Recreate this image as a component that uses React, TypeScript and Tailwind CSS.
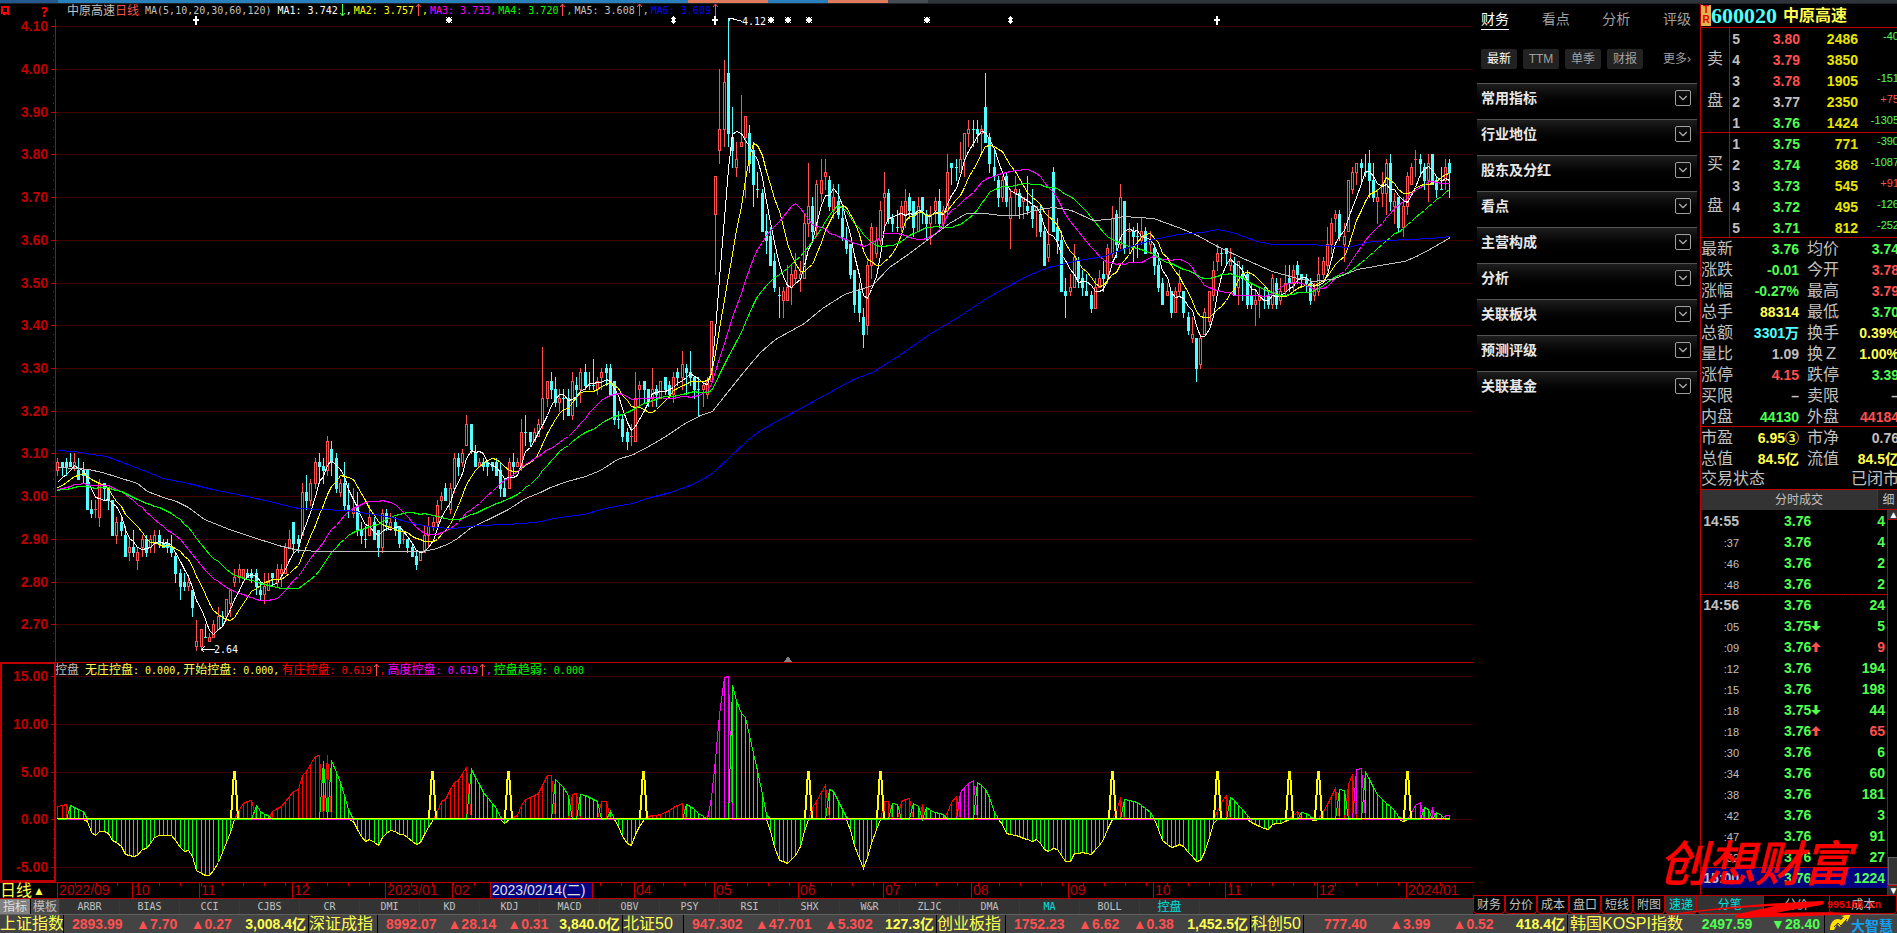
import clsx from "clsx";
import { ChevronDown } from "lucide-react";

const CJK = "font-['Liberation_Sans','Noto_Sans_CJK_SC',sans-serif]";
const MONO = "font-['DejaVu_Sans_Mono','Noto_Sans_CJK_SC',monospace] text-[10px]";

// open close high low, in cents, one candle per trading day
const CANDLES = `
306 308 309 305,308 307 308 305,308 307 309 305,308 307 310 307,307 308 310 306,306 304 309 304,306 305 308 303,306 297 306 297,297 296 299 295,297 297 299 295,
295 303 304 293,303 302 303 299,302 299 302 297,299 291 299 291,291 294 295 289,294 292 295 291,291 286 293 286,287 288 290 285,288 287 292 286,285 287 288 283,
288 290 291 286,290 287 291 286,288 290 291 287,289 291 292 287,291 289 292 288,289 288 290 288,289 288 290 287,288 287 291 286,286 282 287 280,282 279 283 276,
280 279 282 278,279 280 281 278,278 274 278 272,265 266 271 264,265 269 269 264,267 267 270 267,266 267 268 266,267 270 271 267,269 272 274 269,272 272 273 270,
272 276 276 271,275 278 278 272,280 281 283 279,281 283 284 280,281 283 283 281,282 281 283 281,282 281 283 280,282 279 283 277,278 277 280 276,277 279 282 275,
278 280 282 278,282 281 282 279,280 283 284 279,282 283 284 279,282 288 289 282,288 290 292 288,294 289 294 287,290 289 291 287,291 301 303 291,301 299 305 297,
299 303 304 298,303 308 309 302,308 307 310 303,307 306 309 303,306 313 314 305,311 308 313 305,309 302 310 301,301 303 304 300,303 298 308 297,298 297 303 295,
296 297 302 295,298 292 301 291,292 291 294 289,290 290 293 288,291 295 298 291,294 290 295 290,292 288 292 286,288 296 297 287,296 294 297 292,293 294 296 292,
294 292 295 291,293 289 293 288,290 290 292 289,290 288 290 287,288 286 289 286,286 284 287 283,285 287 287 285,287 291 293 287,291 293 295 288,293 294 295 292,
294 298 299 293,299 300 301 297,302 299 303 299,297 302 303 296,302 309 310 301,309 307 310 305,308 310 311 307,312 317 319 312,317 311 317 310,310 307 312 307,
307 308 309 307,308 307 309 306,308 307 308 305,308 307 308 306,308 305 309 305,306 302 308 300,302 300 304 300,302 308 309 302,308 307 310 305,307 308 309 307,
307 315 318 306,315 315 319 312,315 313 315 312,313 315 316 313,314 317 318 314,317 323 335 316,323 327 327 321,327 325 329 323,325 322 328 321,322 323 325 320,
323 323 325 318,323 319 325 319,319 327 329 318,326 325 328 321,325 329 330 322,329 326 331 325,326 326 329 325,326 326 332 325,325 327 328 324,328 329 330 325,
330 329 331 326,330 324 331 324,327 318 327 317,318 318 320 316,318 314 319 313,315 313 316 311,314 314 317 312,313 323 329 313,325 326 327 321,327 325 327 322,
325 322 325 321,323 325 330 321,325 324 326 321,323 327 327 323,328 325 328 324,326 324 327 323,324 328 329 322,329 328 330 326,328 331 334 325,330 329 331 324,
329 328 334 326,328 325 328 323,325 325 328 319,325 326 327 321,324 327 328 323,327 341 341 327,366 375 375 352,381 386 400 378,386 397 402 382,399 385 412 382,
384 381 391 377,377 379 383 375,382 383 394 382,384 389 389 370,385 378 387 376,381 373 383 368,372 372 376 370,371 362 372 362,362 360 366 357,361 354 363 354,
355 349 357 348,347 347 349 342,346 348 349 342,346 349 354 346,349 352 354 345,351 353 357 350,351 352 355 348,351 364 366 351,364 368 378 361,368 362 370 360,
363 373 374 361,371 374 379 369,375 376 379 372,374 368 375 367,367 370 373 365,369 366 373 365,365 361 368 360,360 358 363 357,359 352 359 351,353 345 353 343,
348 343 350 341,342 338 344 335,340 354 355 338,354 363 364 351,357 360 363 356,360 367 369 359,370 371 376 362,371 365 372 364,365 364 366 362,363 363 367 362,
363 368 369 362,366 369 372 363,370 367 371 365,369 363 369 361,362 368 370 362,370 367 370 364,366 364 367 360,364 366 368 359,367 369 370 364,369 364 372 363,
364 367 368 363,367 376 380 366,378 377 378 373,377 377 379 374,376 379 383 376,379 385 385 375,385 386 388 382,386 386 388 382,386 385 388 383,385 386 387 380,
391 383 399 383,384 378 385 376,377 375 381 374,374 370 375 368,370 374 375 369,375 369 376 368,365 370 372 358,371 372 375 366,371 368 372 365,369 370 370 365,
368 367 375 366,368 365 372 363,367 368 368 361,366 362 368 361,362 354 363 354,356 359 367 355,376 362 377 362,363 360 365 357,360 348 362 348,348 347 351 342,
348 349 352 347,349 356 359 349,355 351 356 349,351 349 353 347,348 347 352 347,347 344 348 343,344 349 351 344,349 351 353 349,352 351 355 348,352 358 359 350,
357 365 368 356,366 359 367 356,359 370 373 358,369 358 369 357,362 362 364 357,362 361 363 355,361 361 364 356,360 362 365 359,362 357 363 357,359 360 362 357,
358 354 359 352,354 349 357 348,350 345 351 345,347 348 350 347,348 343 348 342,343 348 349 343,348 350 353 347,348 343 348 342,342 339 343 338,337 338 342 336,
337 330 337 327,331 337 338 330,338 343 344 338,341 348 348 340,347 353 355 346,355 357 359 353,357 357 358 354,358 357 358 354,354 355 358 353,354 347 356 347,
349 355 355 345,352 351 354 346,352 345 353 344,347 345 350 344,345 346 348 340,346 347 349 342,346 346 349 344,347 345 348 344,345 351 352 344,350 345 351 344,
346 348 351 345,348 350 354 347,351 350 354 348,350 353 354 348,354 352 355 350,352 351 352 349,351 350 352 348,350 346 351 345,347 348 350 346,348 352 356 347,
352 355 356 351,354 359 363 353,359 364 365 357,365 366 367 362,366 361 367 360,359 361 364 355,362 374 374 362,372 376 377 371,376 378 378 373,378 377 379 373,
376 376 380 375,378 374 381 370,374 370 378 369,369 370 372 364,371 373 376 368,371 378 379 366,378 369 380 367,368 369 371 364,370 363 370 362,363 368 370 361,
368 375 376 366,373 377 378 373,379 379 381 375,379 378 380 375,377 374 378 372,374 378 380 369,380 373 380 373,374 372 375 370,372 372 377 372,374 377 379 372,
378 376 379 370`
  .split(",")
  .map((c) => c.trim().split(" ").map(Number));

const MA60 =
  "58,467 76,468 88,469 102,472 118,477 137,483 147,491 163,497 176,501 188,507 204,519 229,529 253,537 278,545 298,550 322,551 355,551 420,551 433,549 447,544 457,538 471,527 486,520 508,509 525,498 540,492 550,487 567,481 585,476 600,470 617,459 633,454 650,445 667,435 683,424 700,415 712,411 727,392 743,372 760,352 775,339 804,323 822,308 844,294 872,285 889,267 909,253 929,238 949,223 966,213 984,213 1001,215 1018,215 1038,209 1053,207 1071,210 1093,220 1108,219 1123,216 1153,218 1178,227 1197,235 1217,246 1232,253 1247,260 1272,271 1297,278 1312,281 1332,279 1357,269 1374,266 1404,261 1416,256 1431,248 1450,237";
const MA120 =
  "58,450 73,451 92,454 106,456 122,462 143,470 163,478 188,483 212,489 237,494 265,500 298,508 318,509 347,510 367,513 392,517 408,522 433,527 453,528 478,525 506,524 535,522 559,517 584,514 600,509 615,506 632,503 650,497 670,492 687,486 700,480 712,473 730,456 747,440 760,430 853,379 872,372 899,355 929,334 959,316 986,298 1013,283 1028,275 1048,267 1073,261 1103,256 1128,247 1153,239 1178,234 1202,232 1217,229 1232,232 1257,241 1272,244 1312,244 1347,247 1372,241 1406,239 1431,238 1450,236";

// x and height of the control indicator, in px above the zero line
const CONTROL =
  `58,13 65,15 73,13 78,10 83,8 87,-2 91,-13 96,-17 99,-12 107,-12 111,-21 120,-25 124,-35 133,-37 138,-36 142,-30 146,-29 155,-17 158,-16 171,-16 176,-22 180,-28 184,-32 188,-31 192,-37 196,-51 200,-54 204,-56 209,-56 213,-51 218,-43 225,-25 230,-13 234,0 239,10 242,16 251,19 256,14 260,8 267,3 272,8 280,12 285,18 293,28 297,25 301,43 306,48 315,63 319,64 322,57 327,64 331,59 340,37 348,10 352,0 356,-8 360,-16 365,-22 369,-20 373,-22 378,-26 382,-18 390,-11 394,-11 399,-15 403,-15 416,-25 420,-23 424,-15 433,0 437,8 441,18 445,20 449,27 453,37 458,39 467,54 471,50 483,27 496,11 501,0 505,-5 509,0 513,2 518,5 522,17 526,21 533,23 538,26 547,44 551,44 556,39 563,32 567,24 576,26 584,24 596,18 606,18 612,3 615,0 624,-22 631,-26 635,-15 643,0 649,3 660,5 669,9 680,16 688,15 699,5 706,1 710,12 715,60 719,105 722,139 725,143 728,143 733,132 737,115 741,106 745,102 751,75 759,40 765,10 767,0 774,-27 779,-41 787,-44 792,-39 799,-31 804,-12 808,0 812,12 817,20 825,34 830,29 834,27 841,12 847,0 855,-30 863,-49 868,-35 872,-20 880,0 884,18 889,18 896,14 903,19 910,21 915,12 924,14 929,9 935,7 940,6 946,4 951,17 959,26 968,36 973,39 978,37 987,28 992,12 996,2 1000,0 1006,-14 1016,-16 1022,-19 1032,-22 1037,-20 1046,-33 1056,-28 1066,-44 1071,-42 1074,-34 1083,-33 1091,-35 1102,-22 1107,-10 1112,0 1118,14 1121,24 1124,20 1135,18 1143,13 1150,7 1154,0 1162,-21 1172,-29 1180,-24 1190,-35 1198,-44 1203,-36 1210,-15 1214,0 1220,15 1226,24 1231,22 1239,13 1247,4 1251,-3 1258,-7 1268,-10 1272,-5 1283,-3 1288,0 1297,8 1302,7 1308,5 1313,-1 1319,1 1327,15 1335,31 1341,30 1345,28 1352,45 1357,51 1362,51 1368,42 1376,26 1384,18 1393,10 1401,-1 1404,-3 1407,0 1415,14 1420,17 1426,10 1432,11 1439,4 1450,4`
    .split(" ")
    .map((p) => p.split(",").map(Number));

const SPIKES = [234, 432, 508, 643, 808, 880, 1112, 1217, 1289, 1318, 1407];
const STRONG = [
  [708, 732],
  [960, 979],
  [1353, 1364],
  [1407, 1450],
];

const MONTHS: [number, string][] = [
  [58, "2022/09"],
  [133, "10"],
  [200, "11"],
  [293, "12"],
  [386, "2023/01"],
  [453, "02"],
  [635, "04"],
  [715, "05"],
  [799, "06"],
  [884, "07"],
  [972, "08"],
  [1069, "09"],
  [1154, "10"],
  [1226, "11"],
  [1318, "12"],
  [1407, "2024/01"],
];

const TABS = ["ARBR", "BIAS", "CCI", "CJBS", "CR", "DMI", "KD", "KDJ", "MACD", "OBV", "PSY", "RSI", "SHX", "W&R", "ZLJC", "DMA", "MA", "BOLL", "控盘"];

const SELL = [
  ["5", "3.80", "2486", "-40"],
  ["4", "3.79", "3850", ""],
  ["3", "3.78", "1905", "-151"],
  ["2", "3.77", "2350", "+75"],
  ["1", "3.76", "1424", "-1305"],
];
const BUY = [
  ["1", "3.75", "771", "-390"],
  ["2", "3.74", "368", "-1087"],
  ["3", "3.73", "545", "+91"],
  ["4", "3.72", "495", "-126"],
  ["5", "3.71", "812", "-252"],
];

const RED = "text-[#ff5050]";
const GREEN = "text-[#50ff50]";
const YELLOW = "text-[#ffff50]";
const CYAN = "text-[#50ffff]";
const GRAY = "text-[#c0c0c0]";

const QUOTES = [
  ["最新", "3.76", GREEN, "均价", "3.74", GREEN],
  ["涨跌", "-0.01", GREEN, "今开", "3.78", RED],
  ["涨幅", "-0.27%", GREEN, "最高", "3.79", RED],
  ["总手", "88314", YELLOW, "最低", "3.70", GREEN],
  ["总额", "3301万", CYAN, "换手", "0.39%", YELLOW],
  ["量比", "1.09", GRAY, "换Ｚ", "1.00%", YELLOW],
  ["涨停", "4.15", RED, "跌停", "3.39", GREEN],
  ["买限", "–", GRAY, "卖限", "–", GRAY],
  ["内盘", "44130", GREEN, "外盘", "44184", RED],
];
const VALUES = [
  ["市盈", "6.95③", YELLOW, "市净", "0.76", GRAY],
  ["总值", "84.5亿", YELLOW, "流值", "84.5亿", YELLOW],
];

const TICKS = [
  ["14:55", "3.76", "4"],
  [":37", "3.76", "4"],
  [":46", "3.76", "2"],
  [":48", "3.76", "2"],
  ["14:56", "3.76", "24"],
  [":05", "3.75", "5", "down"],
  [":09", "3.76", "9", "up"],
  [":12", "3.76", "194"],
  [":15", "3.76", "198"],
  [":18", "3.75", "44", "down"],
  [":18", "3.76", "65", "up"],
  [":30", "3.76", "6"],
  [":34", "3.76", "60"],
  [":38", "3.76", "181"],
  [":42", "3.76", "3"],
  [":47", "3.76", "91"],
  [":52", "3.76", "27"],
  ["15:00", "3.76", "1224"],
];

const INDEXES = [
  { name: "上证指数", box: "w-[309px]", label: "w-16", pad: "pl-2", values: ["2893.99", "▲7.70", "▲0.27"], total: "3,008.4亿" },
  { name: "深证成指", box: "w-[314px]", label: "w-[69px]", pad: "pl-2", values: ["8992.07", "▲28.14", "▲0.31"], total: "3,840.0亿" },
  { name: "北证50", box: "w-[314px]", label: "w-[61px]", pad: "pl-2", values: ["947.302", "▲47.701", "▲5.302"], total: "127.3亿" },
  { name: "创业板指", box: "w-[314px]", label: "w-[69px]", pad: "pl-2", values: ["1752.23", "▲6.62", "▲0.38"], total: "1,452.5亿" },
  { name: "科创50", box: "w-[317px]", label: "w-[53px]", pad: "pl-5", values: ["777.40", "▲3.99", "▲0.52"], total: "418.4亿" },
];

const candleX = (i: number) => Math.round(57.3 + i * 4.2176);
const priceY = (cents: number) => Math.round(26.3 + (410 - cents) * 4.271);

function average(period: number) {
  const closes = [...Array(26).fill(301), 301, 303, 302, 302, ...CANDLES.map((c) => c[1])];
  return CANDLES.map((_, i) => {
    const end = i + 31;
    const sum = closes.slice(end - period, end).reduce((a: number, b: number) => a + b, 0);
    return `${candleX(i)},${priceY(sum / period)}`;
  }).join(" ");
}

function controlAt(x: number) {
  const next = CONTROL.findIndex((p) => p[0] >= x);
  if (next <= 0) return next === 0 ? CONTROL[0][1] : 4;
  const [x0, h0] = CONTROL[next - 1];
  const [x1, h1] = CONTROL[next];
  return Math.round(h0 + ((h1 - h0) * (x - x0)) / (x1 - x0));
}

function Marker({ x, kind }: { x: number; kind: "plus" | "star" | "diamond" }) {
  const d = {
    plus: "M-3 -1h2v-3h2v3h2v2h-2v4h-2v-4h-2z",
    star: "M-3 -3h1v1h1v-1h2v1h1v-1h1v1h-1v1h1v2h-1v1h1v1h-1v-1h-1v1h-2v-1h-1v1h-1v-1h1v-1h-1v-2h1v-1h-1z",
    diamond: "M0 -4L3 -1L1 0L3 1L0 4L-2 1L-1 0L-2 -1z",
  }[kind];
  return <path d={d} fill="#fff" transform={`translate(${x} 20)`} />;
}

function PriceChart() {
  return (
    <svg className="block h-[643px] w-full overflow-visible" shapeRendering="crispEdges">
      <g transform="translate(0 -19)">
        {Array.from({ length: 15 }, (_, i) => {
          const y = priceY(410 - i * 10);
          return (
            <g key={i}>
              <rect x="56" y={y} width="96.2%" height="1" fill="#400000" />
              <rect x="51" y={y} width="5" height="1" fill="#c00000" />
              <text x="48" y={y + 5} textAnchor="end" className="fill-[#c00000] text-sm font-bold">
                {((410 - i * 10) / 100).toFixed(2)}
              </text>
            </g>
          );
        })}
        {Array.from({ length: 73 }, (_, i) => (
          <rect key={i} x="53" y={priceY(410 - i * 2)} width="1" height="1" fill="#c00000" />
        ))}
        {CANDLES.map(([open, close, high, low], i) => {
          const up = open === close ? close > (CANDLES[i - 1]?.[1] ?? 0) : close > open;
          const x = candleX(i);
          const top = priceY(Math.max(open, close));
          const bottom = priceY(Math.min(open, close));
          const color = up ? "#ff5050" : "#50ffff";
          return (
            <g key={i} fill={color}>
              <rect x={x} y={priceY(high)} width="1" height={top - priceY(high)} />
              <rect x={x} y={bottom} width="1" height={priceY(low) - bottom + 1} />
              <rect x={x - 1} y={top} width="3" height={bottom - top + 1} />
              {up && bottom - top > 1 && <rect x={x} y={top + 1} width="1" height={bottom - top - 1} fill="#000" />}
            </g>
          );
        })}
        <g fill="none" transform="translate(0.5 0.5)">
          <polyline points={average(5)} stroke="#fff" />
          <polyline points={average(10)} stroke="#ff0" />
          <polyline points={average(20)} stroke="#f0f" />
          <polyline points={average(30)} stroke="#0f0" />
          <polyline points={MA60} stroke="#c0c0c0" />
          <polyline points={MA120} stroke="#00f" />
          <path d="M728 18l5 0M728 18l2 3M729 18l6 1l7 2M201 649h13M204 646l-3 3l3 3" stroke="#fff" />
        </g>
        <g className={clsx(MONO, "fill-white")}>
          <text x="742" y="25">4.12</text>
          <text x="214" y="653">2.64</text>
        </g>
        {[196, 715, 1217].map((x) => <Marker key={x} x={x} kind="plus" />)}
        {[449, 771, 788, 809, 927].map((x) => <Marker key={x} x={x} kind="star" />)}
        {[673, 1010].map((x) => <Marker key={x} x={x} kind="diamond" />)}
        <path d="M788 656l4 6h-8z" fill="#808080" />
        <rect x="55" y="19" width="1" height="643" fill="#c00000" />
      </g>
    </svg>
  );
}

function ControlChart() {
  const zero = 819;
  const bars = CANDLES.map((_, i) => {
    const x = candleX(i);
    const h = controlAt(x);
    const rising = h >= controlAt(x - 4);
    const strong = rising && STRONG.some(([a, b]) => x >= a && x <= b);
    const color = h <= 0 ? "low" : strong ? "#f0f" : rising ? "#f00" : "#0f0";
    return { x, h, color };
  });
  const line = (color: string) => bars.map((b) => `${b.x},${zero - (b.color === color ? b.h : 0)}`).join(" ");
  return (
    <svg className="block h-[205px] w-full overflow-visible" shapeRendering="crispEdges">
      <g transform="translate(0 -677)">
        {[676, 724, 772, 819, 867].map((y, i) => (
          <g key={y}>
            <rect x="56" y={y} width="96.2%" height="1" fill="#400000" />
            <rect x="51" y={y} width="5" height="1" fill="#c00000" />
            <text x="48" y={y + 5} textAnchor="end" className="fill-[#c00000] text-sm font-bold">
              {(15 - i * 5).toFixed(2)}
            </text>
          </g>
        ))}
        {Array.from({ length: 22 }, (_, i) => (
          <rect key={i} x="53" y={Math.round(676 + i * 9.55)} width="1" height="1" fill="#c00000" />
        ))}
        {bars.map((b) => (
          <rect
            key={b.x}
            x={b.x}
            y={Math.min(zero, zero - b.h)}
            width="1"
            height={Math.abs(b.h)}
            fill={b.color === "low" ? "#0f0" : b.color}
          />
        ))}
        <g fill="none" transform="translate(0.5 0.5)">
          <polyline points={line("low")} stroke="#ff0" />
          <polyline points={line("#f00")} stroke="#f00" />
          <polyline points={line("#f0f")} stroke="#f0f" />
          <polyline points={line("#0f0")} stroke="#0f0" />
        </g>
        <rect x="57" y="818" width="1393" height="1" fill="#ff0" />
        {SPIKES.map((x) => (
          <path key={x} d={`M${x - 3} 818L${x} 772h1L${x + 4} 818`} fill="none" stroke="#ff0" strokeWidth="2" />
        ))}
        <rect x="1" y="663" width="54" height="218" fill="none" stroke="#c00000" strokeWidth="2" />
      </g>
    </svg>
  );
}

function DateAxis() {
  return (
    <div className="relative h-[17px] border-y border-[#c00000]">
      <svg className="block h-[15px] w-full" shapeRendering="crispEdges">
        {Array.from({ length: 66 }, (_, i) => (
          <rect key={i} x={75 + i * 21} y="0" width="1" height="3" fill="#c00000" />
        ))}
        {MONTHS.map(([x, label]) => (
          <g key={x}>
            <rect x={x - 1} y="0" width="1" height="15" fill="#c00000" />
            <text x={x + 1} y="12" className="fill-[#c00000] text-sm">{label}</text>
          </g>
        ))}
      </svg>
      <button className="absolute top-0 left-0 flex h-[15px] items-center gap-px bg-black text-base leading-none text-[#ffff50]">
        日线<span className="text-xs">▲</span>
      </button>
      <span className="absolute top-0 left-[490px] h-[15px] w-[103px] overflow-hidden border-x border-[#c00000] bg-[#000080] pl-px text-sm leading-[15px] whitespace-nowrap text-[#e0e0e0]">
        2023/02/14(二)
      </span>
    </div>
  );
}

function Legend({ color, text, arrow }: { color: string; text: string; arrow?: "up" | "down" }) {
  return (
    <span className={clsx("flex shrink-0 whitespace-pre", color)}>
      {text}
      {arrow && (
        <svg width="8" height="14" viewBox="0 0 8 14" fill="none" className={arrow === "up" ? "text-[#ff5050]" : "text-[#50ff50]"}>
          <path d={arrow === "up" ? "M4.5 13V1.5M2 4l2.5-3L7 4" : "M4.5 1v11.5M2 10l2.5 3L7 10"} stroke="currentColor" />
        </svg>
      )}
    </span>
  );
}

function InfoPanel() {
  return (
    <section className="flex w-[227px] shrink-0 flex-col pr-[3px] pl-1">
      <nav className="flex h-[26px] items-center justify-between pt-1 pr-1.5 pl-1 text-sm text-[#a0a0a0]">
        {["财务", "看点", "分析", "评级"].map((t, i) => (
          <a key={t} href="#" className={clsx("leading-5", i === 0 && "border-b border-white text-white")}>
            {t}
          </a>
        ))}
      </nav>
      <div className="mt-[19px] flex h-5 gap-1.5 pl-1 text-xs">
        {["最新", "TTM", "单季", "财报"].map((t, i) => (
          <button key={t} className={clsx("w-9 rounded-xs bg-[#222]", i === 0 ? "text-white" : "text-[#a0a0a0]")}>
            {t}
          </button>
        ))}
        <a href="#" className="ml-auto pr-1.5 leading-5 text-[#a0a0a0]">更多›</a>
      </div>
      <div className="mt-3.5">
        {["常用指标", "行业地位", "股东及分红", "看点", "主营构成", "分析", "关联板块", "预测评级", "关联基金"].map((t) => (
          <button
            key={t}
            className="flex h-9 w-full justify-between border-t border-[#555] bg-linear-to-b from-[#1e1e1e] to-black to-80% px-1 pt-[5px] text-sm font-bold text-[#e8e8e8]"
          >
            <span className="leading-[18px]">{t}</span>
            <span className="mt-px mr-0.5 flex size-4 items-center justify-center rounded-xs border border-[#a0a0a0]">
              <ChevronDown className="size-3.5 text-[#b0b0b0]" strokeWidth={2} />
            </span>
          </button>
        ))}
      </div>
    </section>
  );
}

function OrderBook({ side, rows }: { side: string; rows: string[][] }) {
  const priceColor = (p: string) => (p > "3.77" ? RED : p === "3.77" ? GRAY : GREEN);
  return (
    <div className="flex h-[105px] border-b border-[#c00000]">
      <div className={clsx("grid w-[29px] shrink-0 grid-rows-5 place-items-center border-r border-[#c00000] text-base leading-none", GRAY)}>
        <span className="row-start-2">{side}</span>
        <span className="row-start-4">盘</span>
      </div>
      <table className="h-[105px] w-[169px] table-fixed text-right text-sm leading-none font-bold">
        <tbody>
          {rows.map(([level, price, volume, delta]) => (
            <tr key={level} className="h-[21px]">
              <td className={clsx("w-[10px] p-0", GRAY)}>{level}</td>
              <td className={clsx("w-[60px] p-0", priceColor(price))}>{price}</td>
              <td className="w-[58px] p-0 text-[#e6e600]">{volume}</td>
              <td className={clsx("p-0 pb-1 text-[11px] leading-none font-normal", delta[0] === "+" ? RED : GREEN)}>{delta}</td>
            </tr>
          ))}
        </tbody>
      </table>
    </div>
  );
}

function QuoteRows({ rows }: { rows: string[][] }) {
  return (
    <table className="w-[198px] table-fixed text-right text-sm leading-none font-bold">
      <tbody>
        {rows.map(([label, value, color, label2, value2, color2]) => (
          <tr key={label} className="h-[21px] whitespace-nowrap">
            <th className={clsx("w-8 p-0 text-left text-base leading-none font-normal", GRAY)}>{label}</th>
            <td className={clsx("w-[66px] p-0", color)}>{value}</td>
            <th className={clsx("w-10 p-0 pl-2 text-left text-base leading-none font-normal", GRAY)}>{label2}</th>
            <td className={clsx("p-0", color2)}>{value2}</td>
          </tr>
        ))}
      </tbody>
    </table>
  );
}

function TickTable() {
  return (
    <div className="flex flex-1">
      <div className="w-[186px] shrink-0">
        <table className="w-full table-fixed border-separate border-spacing-0 text-sm leading-none font-bold">
          <tbody>
            {TICKS.map(([time, price, volume, dir], i) => (
              <tr
                key={i}
                className={clsx(
                  "h-[21px]",
                  i > 0 && time.length > 3 && "[&>td]:border-t [&>td]:border-dotted [&>td]:border-[#c00000]",
                  time === "15:00" && "bg-[#000080]",
                )}
              >
                <td className={clsx("w-[38px] p-0 text-right", GRAY)}>
                  <span className={clsx(time.length <= 3 && "text-[11px] font-normal")}>{time}</span>
                </td>
                <td className={clsx("p-0 pl-[45px]", GREEN)}>
                  <span className="flex items-center">
                    {price}
                    {dir && (
                      <svg width="10" height="10" viewBox="0 0 10 10" className={clsx("fill-current", dir === "up" && RED)}>
                        <path d={dir === "up" ? "M5 0l5 5H6.5v5h-3V5H0z" : "M5 10l5-5H6.5V0h-3v5H0z"} />
                      </svg>
                    )}
                  </span>
                </td>
                <td className={clsx("w-10 p-0 pr-0.5 text-right", dir === "up" ? RED : GREEN)}>{volume}</td>
              </tr>
            ))}
          </tbody>
        </table>
      </div>
      <div className="flex w-3 shrink-0 flex-col border-l border-[#c00000] text-[10px] leading-none text-white">
        <button className="h-[10px] border-b border-[#c00000] bg-[#333] leading-[9px]">▲</button>
        <span className="mt-auto h-7 border border-[#606060] bg-[#333]" />
        <button className="h-[10px] border-t border-[#c00000] bg-[#333] leading-[9px]">▼</button>
      </div>
    </div>
  );
}

function QuotePanel() {
  return (
    <section className="w-[197px] shrink-0 overflow-hidden border-l border-[#c00000]">
      <div className="flex h-full w-[198px] flex-col">
        <header className="flex h-6 items-center border-b border-[#c00000]">
          <span className="flex h-[21px] w-[10px] flex-col items-center bg-[#e6b34a] text-[10px] leading-[10px] font-bold text-[#e00000]">
            <span>T</span>
            <span>R</span>
          </span>
          <h1 className="flex items-center text-base leading-none font-bold text-[#ffff50]">
            <span className="mr-1.5 font-['Liberation_Serif',serif] text-[22px] leading-none text-[#50ffff]">600020</span>
            中原高速
          </h1>
        </header>
        <OrderBook side="卖" rows={SELL} />
        <OrderBook side="买" rows={BUY} />
        <div className="h-[189px] border-b border-[#c00000]">
          <QuoteRows rows={QUOTES} />
        </div>
        <QuoteRows rows={VALUES} />
        <div className={clsx("flex h-5 items-center justify-between text-base leading-none", GRAY)}>
          <span>交易状态</span>
          <span>已闭市</span>
        </div>
        <div className={clsx("flex h-[21px] border-t border-[#c00000] bg-[#333] text-xs leading-5", GRAY)}>
          <span className="w-[176px] shrink-0 pl-[74px]">分时成交</span>
          <button className="w-[22px] shrink-0 border-b border-l border-[#c00000] bg-[#222]">细</button>
        </div>
        <TickTable />
      </div>
    </section>
  );
}

function SideTabs() {
  return (
    <nav className={clsx("flex h-[19px] border-t border-[#c00000] bg-black text-xs", GRAY)}>
      {["财务", "分价", "成本", "盘口", "短线", "附图", "速递"].map((t) => (
        <button
          key={t}
          className={clsx("w-8 rounded-b border-r border-b border-l border-[#c00000] leading-none", t === "速递" && "bg-[#333] text-[#00e0e0]")}
        >
          {t}
        </button>
      ))}
      {["分笔", "分价", "成本"].map((t, i) => (
        <button key={t} className={clsx("flex-1 rounded-b border-r border-b border-[#c00000] leading-none", i === 0 && "bg-[#333] text-[#00e0e0]")}>
          {t}
        </button>
      ))}
    </nav>
  );
}

function StatusBar() {
  return (
    <footer className="flex h-[19px] items-center overflow-hidden border-t border-[#606060] bg-[#444] text-sm leading-[18px] font-bold whitespace-nowrap">
      {INDEXES.map((it) => (
        <div key={it.name} className={clsx("flex shrink-0 border-r border-black", it.box)}>
          <span className={clsx("shrink-0 overflow-hidden border-r border-black text-base leading-[18px]", YELLOW, it.label)}>
            <span className="font-normal">{it.name}</span>
          </span>
          <span className={clsx("flex flex-1 justify-between pr-0.5", it.pad, RED)}>
            {it.values.map((v) => (
              <span key={v}>{v}</span>
            ))}
            <span className={YELLOW}>{it.total}</span>
          </span>
        </div>
      ))}
      <div className={clsx("flex w-[257px] shrink-0 justify-between border-r border-black pr-1 pl-0.5", GREEN)}>
        <span className={clsx("text-base leading-[18px] font-normal", YELLOW)}>韩国KOSPI指数</span>
        <span>2497.59</span>
        <span>▼28.40</span>
      </div>
      <div className="flex flex-1 items-start overflow-hidden pl-1">
        <svg className="h-[18px] w-[22px] shrink-0" viewBox="0 0 22 18">
          <path d="M1 18c0-9 6-13 11-10l3-3-3-1 10-2-4 8-1-2-6 7-3-3-3 6z" fill="#ffe000" />
          <path d="M5 15l4-4 3 3 6-7" stroke="#333" strokeWidth="1" fill="none" />
        </svg>
        <span className="pt-1 text-sm leading-5 text-[#10a0f0]">大智慧</span>
      </div>
    </footer>
  );
}

export default function App() {
  return (
    <div className={clsx("relative flex min-h-screen flex-col overflow-hidden bg-black", CJK)}>
      <div className="flex h-1 border-b border-[#20242a] bg-[#2f333a]">
        <span className="w-[58px] bg-[#24588f]" />
        <span className="w-[630px] bg-[#2880bc]" />
        <span className="w-20 bg-[#e07c5c]" />
        <span className="w-[60px] bg-[#2880bc]" />
        <span className="w-[60px] bg-[#e07c5c]" />
        <span className="w-10 bg-[#464b54]" />
      </div>

      <main className="flex flex-1">
        <section className="flex min-w-0 flex-1 flex-col">
          <header className={clsx("flex h-[15px] items-center pb-0.5", MONO)}>
            <svg className="h-[15px] w-[67px] shrink-0 overflow-visible" viewBox="0 0 67 15">
              <path d="M2 4h6v6H2zM7 9l2 3M3 11h3" fill="none" stroke="red" strokeWidth="2" />
              <text x="41" y="14" className="fill-[red] font-sans text-sm font-bold">?</text>
            </svg>
            <span className="shrink-0 text-xs leading-none text-[#c0c0c0]">中原高速</span>
            <span className="mr-1.5 shrink-0 text-xs leading-none text-[#ff5050]">日线</span>
            <Legend color="text-[#c0c0c0]" text="MA(5,10,20,30,60,120) " />
            <Legend color="text-white" text="MA1: 3.742" arrow="down" />
            <Legend color="text-white mr-0.5" text="," />
            <Legend color="text-[#ff0]" text="MA2: 3.757" arrow="up" />
            <Legend color="text-[#ff0] mr-0.5" text="," />
            <Legend color="text-[#f0f] mr-0.5" text="MA3: 3.733," />
            <Legend color="text-[#0f0]" text="MA4: 3.720" arrow="up" />
            <Legend color="text-[#0f0] mr-0.5" text="," />
            <Legend color="text-[#c0c0c0]" text="MA5: 3.608" arrow="up" />
            <Legend color="text-[#c0c0c0] mr-0.5" text="," />
            <Legend color="text-[#00f]" text="MA6: 3.609" arrow="up" />
          </header>
          <PriceChart />
          <div className="border-t border-[#c00000]">
            <header className={clsx("flex h-[14px] items-center pl-[55px]", MONO)}>
              <span className="mr-1.5 shrink-0 text-xs leading-none text-[#c0c0c0]">控盘</span>
              {[
                { name: "无庄控盘", value: ": 0.000,", color: "text-[#ffff50]" },
                { name: "开始控盘", value: ": 0.000,", color: "text-[#ffff50]" },
                { name: "有庄控盘", value: ": 0.619", color: "text-[#f00]", up: true },
                { name: "高度控盘", value: ": 0.619", color: "text-[#f0f]", up: true },
                { name: "控盘趋弱", value: ": 0.000", color: "text-[#0f0]" },
              ].map((l) => (
                <span key={l.name} className={clsx("mr-0.5 flex shrink-0 items-center", l.color)}>
                  <span className="text-xs leading-none">{l.name}</span>
                  <Legend color={l.color} text={l.value} arrow={l.up ? "up" : undefined} />
                  {l.up && ","}
                </span>
              ))}
            </header>
            <ControlChart />
          </div>
          <DateAxis />
          <nav className={clsx("flex h-[15px] flex-1 bg-[#333] text-[#c0c0c0]", MONO)}>
            <button className="w-[30px] shrink-0 bg-[#808080] text-xs leading-none text-[#e0e0e0]">指标</button>
            <button className="w-[29px] shrink-0 border-l border-black bg-[#4a4a4a] text-xs leading-none">模板</button>
            {TABS.map((t) => (
              <button
                key={t}
                className={clsx("w-[60px] shrink-0 border-l border-[#c00000] leading-none", (t === "MA" || t === "控盘") && "text-[#00e0e0]", t === "控盘" && "text-xs")}
              >
                {t}
              </button>
            ))}
            <span className="border-l border-[#c00000]" />
          </nav>
        </section>

        <aside className="flex w-[424px] shrink-0 flex-col">
          <div className="flex flex-1">
            <InfoPanel />
            <QuotePanel />
          </div>
          <SideTabs />
        </aside>
      </main>
      <StatusBar />

      {/* site mark lying over the tick list and the tabs */}
      <div className="pointer-events-none absolute right-0 bottom-3 h-[84px] w-60 text-[#ff0000]">
        <span className="absolute top-1 left-0.5 text-5xl leading-none whitespace-nowrap italic [-webkit-text-stroke:1px_#ff0000]">创想财富</span>
        <svg className="absolute bottom-0 left-0" width="240" height="30" viewBox="0 0 240 30">
          <path
            d="M3 25C50 17 110 12 164 10c4 0 4 3 0 4-14 3-32 5-46 8 34-1 66-1 99 1-44 1-92 3-134 4-6 0-7-2-1-4 10-3 24-5 36-8C84 16 44 20 3 25z"
            fill="#ff0000"
          />
        </svg>
        <span className="absolute right-4 bottom-2 font-['Liberation_Mono',monospace] text-[10px] font-bold">995168.cn</span>
      </div>
    </div>
  );
}
